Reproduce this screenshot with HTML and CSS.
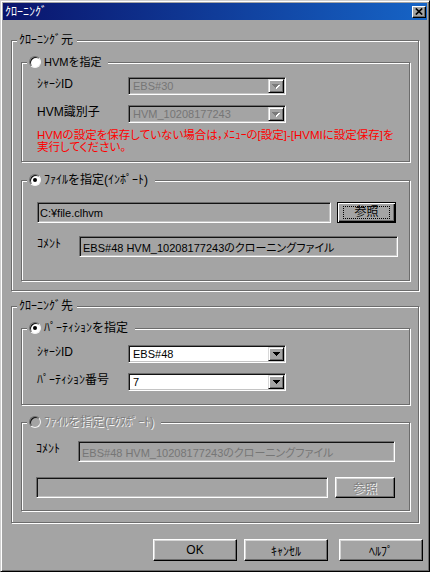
FILE: index.html
```html
<!DOCTYPE html>
<html lang="ja">
  <head>
    <meta charset="UTF-8" />
    <title>クローニング</title>
    <link rel="stylesheet" href="styles.css">
  </head>
  <body>
    <div class="window">
      <div class="titlebar">
        <span class="title">ｸﾛｰﾆﾝｸﾞ</span>
        <span class="close-btn">
          <svg width="8" height="7" viewBox="0 0 8 7"><path d="M0.8 0.5l6.4 6M7.2 0.5l-6.4 6" stroke="#000" stroke-width="1.7" /></svg>
        </span>
      </div>

      <!-- クローニング元 -->
      <div class="group outer outer-src">
        <div class="group-title">ｸﾛｰﾆﾝｸﾞ元</div>

        <div class="group inner inner-hvm">
          <div class="group-title radio-title small"><span class="radio"></span>HVMを指定</div>
          <div class="field first">
            <span class="field-label">ｼｬｰｼID</span>
            <div class="combo disabled">
              <span class="combo-text">EBS#30</span>
              <span class="combo-btn">
                <svg width="8" height="5" viewBox="0 0 8 5" shape-rendering="crispEdges"><path fill="#fff" d="M1 1h7v1h-1v1h-1v1h-1v1h-1v-1h-1v-1h-1v-1h-1z" /><path fill="#7a7a7a" d="M0 0h7v1h-1v1h-1v1h-1v1h-1v-1h-1v-1h-1v-1h-1z" /></svg>
              </span>
            </div>
          </div>
          <div class="field">
            <span class="field-label">HVM識別子</span>
            <div class="combo disabled">
              <span class="combo-text">HVM_10208177243</span>
              <span class="combo-btn">
                <svg width="8" height="5" viewBox="0 0 8 5" shape-rendering="crispEdges"><path fill="#fff" d="M1 1h7v1h-1v1h-1v1h-1v1h-1v-1h-1v-1h-1v-1h-1z" /><path fill="#7a7a7a" d="M0 0h7v1h-1v1h-1v1h-1v1h-1v-1h-1v-1h-1v-1h-1z" /></svg>
              </span>
            </div>
          </div>
          <p class="warning">HVMの設定を保存していない場合は，ﾒﾆｭｰの[設定]-[HVMIに設定保存]を<br>実行してください。</p>
        </div>

        <div class="group inner inner-import">
          <div class="group-title radio-title"><span class="radio checked"></span>ﾌｧｲﾙを指定(ｲﾝﾎﾟｰﾄ)</div>
          <div class="field first">
            <div class="edit path-edit"><span class="edit-text">C:¥file.clhvm</span></div>
            <button class="btn btn-browse default"><span class="focus">参照</span></button>
          </div>
          <div class="field">
            <span class="field-label short">ｺﾒﾝﾄ</span>
            <div class="edit comment-edit"><span class="edit-text">EBS#48 HVM_10208177243のクローニングファイル</span></div>
          </div>
        </div>
      </div>

      <!-- クローニング先 -->
      <div class="group outer outer-dst">
        <div class="group-title">ｸﾛｰﾆﾝｸﾞ先</div>

        <div class="group inner inner-part">
          <div class="group-title radio-title"><span class="radio checked"></span>ﾊﾟｰﾃｨｼｮﾝを指定</div>
          <div class="field first">
            <span class="field-label">ｼｬｰｼID</span>
            <div class="combo">
              <span class="combo-text">EBS#48</span>
              <span class="combo-btn">
                <svg width="7" height="4" viewBox="0 0 7 4" shape-rendering="crispEdges"><path d="M0 0h7v1h-1v1h-1v1h-1v1h-1v-1h-1v-1h-1v-1h-1z" /></svg>
              </span>
            </div>
          </div>
          <div class="field">
            <span class="field-label">ﾊﾟｰﾃｨｼｮﾝ番号</span>
            <div class="combo">
              <span class="combo-text">7</span>
              <span class="combo-btn">
                <svg width="7" height="4" viewBox="0 0 7 4" shape-rendering="crispEdges"><path d="M0 0h7v1h-1v1h-1v1h-1v1h-1v-1h-1v-1h-1v-1h-1z" /></svg>
              </span>
            </div>
          </div>
        </div>

        <div class="group inner inner-export">
          <div class="group-title radio-title disabled-text"><span class="radio disabled"></span>ﾌｧｲﾙを指定(ｴｸｽﾎﾟｰﾄ)</div>
          <div class="field first">
            <span class="field-label short">ｺﾒﾝﾄ</span>
            <div class="edit comment-edit disabled"><span class="edit-text">EBS#48 HVM_10208177243のクローニングファイル</span></div>
          </div>
          <div class="field">
            <div class="edit path-edit"></div>
            <button class="btn btn-browse"><span class="disabled-text">参照</span></button>
          </div>
        </div>
      </div>

      <div class="actions">
        <button class="btn btn-ok">OK</button>
        <button class="btn btn-cancel">ｷｬﾝｾﾙ</button>
        <button class="btn btn-help">ﾍﾙﾌﾟ</button>
      </div>
    </div>
  </body>
</html>
```

FILE: styles.css
```css
:root {
  --face: #a4a4a4;
  --shadow: #6c6c6c;
  --light: #fff;
  --dark: #000;
  --gray-text: #767676;
}

* {
  box-sizing: border-box;
}

body {
  margin: 0;
  background: var(--face);
  font-family: "Liberation Sans", "Noto Sans CJK JP", sans-serif;
  font-size: 12px;
  color: #000;
}

/* ウィンドウ枠 */
.window {
  width: 430px;
  height: 572px;
  padding: 2px;
  background: var(--face);
  border: 1px solid;
  border-color: #cfcfcf var(--dark) var(--dark) #cfcfcf;
  box-shadow: inset 1px 1px var(--light), inset -1px -1px var(--shadow);
}

.titlebar {
  height: 17px;
  display: flex;
  align-items: center;
  justify-content: space-between;
  padding-left: 2px;
  background: linear-gradient(90deg, #0a146c, #1664c6);
  color: #fff;
  line-height: 14px;
}

.close-btn {
  width: 14px;
  height: 12px;
  margin-right: 1px;
  display: flex;
  align-items: center;
  justify-content: center;
  background: var(--face);
  border: 1px solid;
  border-color: var(--light) var(--dark) var(--dark) var(--light);
  box-shadow: inset -1px -1px var(--shadow);
}

/* グループボックス */
.group {
  border: 1px solid var(--shadow);
  box-shadow: inset 1px 1px var(--light), 1px 1px var(--light);
}

.group-title {
  width: fit-content;
  height: 14px;
  margin-top: -8px;
  padding: 0 4px 0 2px;
  line-height: 14px;
  background: var(--face);
  display: flex;
  align-items: center;
}
.group-title.small {
  font-size: 11px;
}

.outer {
  margin: 0 8px;
  padding: 0 8px 0 9px;
}
.outer > .group-title {
  margin-left: -4px;
}

.outer-src {
  margin-top: 20px;
  padding-bottom: 9px;
}
.outer-dst {
  margin-top: 15px;
  padding-bottom: 11px;
}

.inner {
  padding-left: 15px;
}
.inner > .group-title {
  margin-left: -10px;
  padding-right: 7px;
}

.inner-hvm {
  margin-top: 15px;
  padding-bottom: 8px;
}
.inner-import {
  margin-top: 18px;
  padding-bottom: 23px;
}
.inner-part {
  margin-top: 15px;
  padding-bottom: 13px;
}
.inner-export {
  margin-top: 17px;
  padding-left: 14px;
  padding-bottom: 12px;
}
.inner-export > .group-title {
  margin-left: -9px;
}

/* ラジオボタン */
.radio {
  width: 12px;
  height: 12px;
  margin-right: 3px;
  flex: none;
  border-radius: 50%;
  background: #fff;
  border: 1px solid;
  border-color: var(--shadow) #f2f2f2 #f2f2f2 var(--shadow);
  box-shadow: inset 1px 1px #111;
  display: flex;
  align-items: center;
  justify-content: center;
}
.radio.checked::after {
  content: "";
  width: 4px;
  height: 4px;
  border-radius: 50%;
  background: #000;
}
.radio.disabled {
  background: var(--face);
}

.disabled-text {
  color: #808080;
  text-shadow: 1px 1px #f4f4f4;
}

/* 行 */
.field {
  display: flex;
  align-items: flex-start;
  margin-top: 10px;
}
.inner-hvm .field.first {
  margin-top: 8px;
}
.inner-import .field.first {
  margin-top: 15px;
}
.inner-import .field {
  margin-top: 13px;
}
.inner-export .field.first {
  margin-top: 12px;
}
.inner-export .field {
  margin-top: 15px;
}

.field-label {
  width: 91px;
  flex: none;
  line-height: 14px;
  white-space: nowrap;
}
.field-label.short {
  width: 42px;
  padding-top: 1px;
}

/* コンボボックス */
.combo {
  width: 158px;
  height: 18px;
  display: flex;
  align-items: stretch;
  background: #fff;
  border: 1px solid;
  border-color: var(--shadow) var(--light) var(--light) var(--shadow);
  box-shadow: inset 1px 1px #121212, inset -1px -1px #c4c4c4;
  padding: 1px;
  font-size: 11px;
}
.combo.disabled {
  background: var(--face);
  color: var(--gray-text);
}
.combo-text {
  flex: 1;
  padding-left: 3px;
  line-height: 14px;
}
.combo-btn {
  width: 16px;
  display: flex;
  align-items: center;
  justify-content: center;
  background: var(--face);
  border: 1px solid;
  border-color: #d8d8d8 var(--dark) var(--dark) #d8d8d8;
  box-shadow: inset 1px 1px var(--light), inset -1px -1px var(--shadow);
}

/* テキストボックス */
.edit {
  height: 21px;
  display: flex;
  align-items: center;
  background: var(--face);
  border: 1px solid;
  border-color: var(--shadow) var(--light) var(--light) var(--shadow);
  box-shadow: inset 1px 1px #121212, inset -1px -1px #c4c4c4;
  padding-left: 2px;
  white-space: nowrap;
  font-size: 11px;
  font-feature-settings: "palt";
}
.edit.disabled {
  color: var(--gray-text);
}
.path-edit {
  width: 294px;
}
.comment-edit {
  width: 319px;
  padding-left: 3px;
}
.inner-export .path-edit {
  width: 292px;
}
.inner-export .comment-edit {
  width: 317px;
}

.warning {
  margin: 6px 0 0;
  color: #ff0000;
  line-height: 12px;
  font-size: 11.5px;
  font-feature-settings: "palt";
  white-space: nowrap;
}

/* ボタン */
.btn {
  font: inherit;
  color: #000;
  padding: 0;
  display: flex;
  align-items: center;
  justify-content: center;
  background: var(--face);
  border: 1px solid;
  border-color: var(--light) var(--dark) var(--dark) var(--light);
  box-shadow: inset -1px -1px var(--shadow), inset 1px 1px #d6d6d6;
}
.btn-browse {
  width: 60px;
  height: 21px;
  margin-left: 7px;
}
.inner-import .btn-browse {
  width: 59px;
  margin-left: 6px;
}
.btn.default {
  border-color: var(--dark);
  box-shadow: inset 1px 1px var(--light), inset -1px -1px var(--dark), inset -2px -2px var(--shadow);
}
.focus {
  width: 47px;
  height: 13px;
  line-height: 11px;
  text-align: center;
  border: 1px dotted #000;
}

.actions {
  display: flex;
  justify-content: flex-end;
  margin-top: 16px;
  padding-right: 4px;
}
.actions .btn {
  width: 84px;
  height: 22px;
}
.btn-cancel {
  margin-left: 7px;
}
.btn-help {
  margin-left: 11px;
}
```
